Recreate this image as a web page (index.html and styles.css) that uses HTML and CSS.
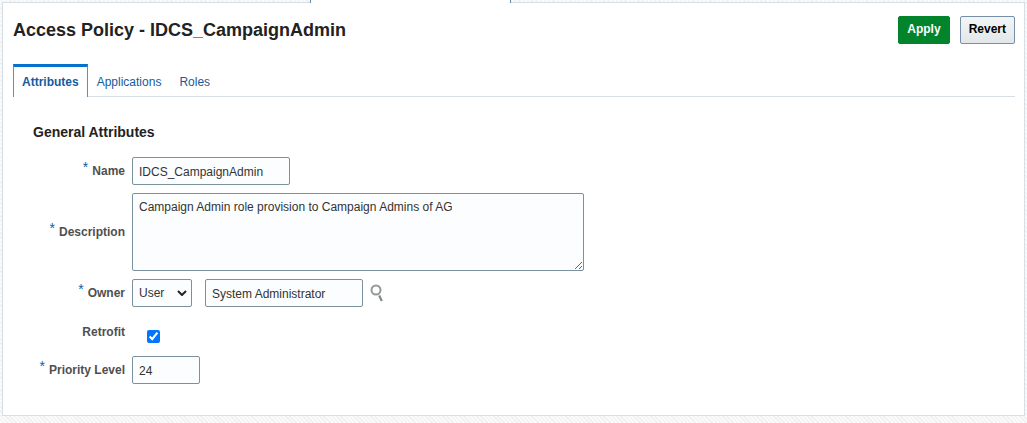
FILE: index.html
```html
<!DOCTYPE html>
<html lang="en">
<head>
<meta charset="utf-8">
<title>Access Policy - IDCS_CampaignAdmin</title>
<link rel="stylesheet" href="styles.css">
</head>
<body>
<div class="window-tabs"><div class="window-tab"></div></div>
<main class="panel">
  <header class="panel-header">
    <h1 class="title">Access Policy - IDCS_CampaignAdmin</h1>
    <div class="actions">
      <button type="button" class="button button-primary">Apply</button>
      <button type="button" class="button">Revert</button>
    </div>
  </header>
  <nav class="tabs">
    <a class="tab tab-active" href="#attributes">Attributes</a>
    <a class="tab" href="#applications">Applications</a>
    <a class="tab" href="#roles">Roles</a>
  </nav>
  <section class="section" id="attributes">
    <h2 class="section-title">General Attributes</h2>
    <form class="form">
      <label class="label" for="name"><span class="required">*</span>Name</label>
      <div class="field"><input class="control control-text" id="name" type="text" value="IDCS_CampaignAdmin"></div>

      <label class="label" for="description"><span class="required">*</span>Description</label>
      <div class="field"><textarea class="control control-area" id="description">Campaign Admin role provision to Campaign Admins of AG</textarea></div>

      <label class="label" for="owner-type"><span class="required">*</span>Owner</label>
      <div class="field">
        <div class="select">
          <select class="control control-select" id="owner-type"><option>User</option><option>Role</option></select>
          <svg class="chevron" viewBox="0 0 10 6" aria-hidden="true"><path d="M1 1l4 4 4-4" fill="none" stroke="#222" stroke-width="2"/></svg>
        </div>
        <input class="control control-text" type="text" value="System Administrator" aria-label="Owner name">
        <button type="button" class="search" aria-label="Search">
          <svg class="search-icon" viewBox="0 0 14 18" aria-hidden="true"><circle cx="6" cy="6" r="4.500" fill="#fff" stroke="#95989a" stroke-width="2"/><path d="M9.200 11.500l2.600 5.500" fill="none" stroke="#85888a" stroke-width="2.200"/></svg>
        </button>
      </div>

      <label class="label" for="retrofit">Retrofit</label>
      <div class="field field-check"><input class="check" id="retrofit" type="checkbox" checked></div>

      <label class="label" for="priority"><span class="required">*</span>Priority Level</label>
      <div class="field"><input class="control control-number" id="priority" type="text" value="24"></div>
    </form>
  </section>
</main>
</body>
</html>
```
FILE: styles.css
```css
* { box-sizing: border-box; }

body {
  margin: 0;
  padding: 0 2px 8px;
  min-height: 100vh;
  background: repeating-linear-gradient(45deg, #f0f0f0 0 1px, #fafafa 1px 3px);
  color: #333;
  font: 12px/16px "Liberation Sans", Arial, sans-serif;
}

.window-tabs {
  display: flex;
  height: 2px;
  padding-left: 308px;
}

.window-tab {
  position: relative;
  width: 201px;
  height: 3px;
  border: solid #6b8ba4;
  border-width: 0 1px;
  background: #fff;
}

.panel {
  padding: 13px 9px 31px 10px;
  border: 1px solid #d6dfe6;
  background: #fff;
}

.panel-header {
  display: flex;
  align-items: flex-start;
  justify-content: space-between;
}

.title {
  margin: 0;
  color: #222;
  font-size: 18px;
  line-height: 28px;
}

.actions {
  display: flex;
  gap: 10px;
}

.button {
  height: 28px;
  padding: 0 8px 2px;
  border: 1px solid #7690a8;
  border-radius: 2px;
  background: linear-gradient(#f3f5f6, #e3e7ea);
  color: #000;
  font: bold 12px/16px "Liberation Sans", Arial, sans-serif;
}

.button-primary {
  border-color: #02842d;
  background: #02842d;
  color: #fff;
}

.tabs {
  display: flex;
  margin-top: 20px;
  background: linear-gradient(#d6dfe6, #d6dfe6) bottom / 100% 1px no-repeat;
}

.tab {
  padding: 7px 9px;
  border-top: 3px solid transparent;
  color: #145c9e;
  text-decoration: none;
}

.tab-active {
  padding: 7px 8px;
  border: 1px solid #6f8ca3;
  border-width: 3px 1px 0;
  border-top-color: #0572ce;
  background: #fff;
  font-weight: bold;
}

.section { padding: 26px 20px 0; }

.section-title {
  margin: 0 0 16px;
  color: #222;
  font-size: 14px;
  line-height: 18px;
}

.form {
  display: grid;
  grid-template-columns: 92px 1fr;
  gap: 8px 7px;
  align-items: center;
}

.label {
  color: #4f4f4f;
  font-weight: bold;
  text-align: right;
  white-space: nowrap;
}

.required {
  position: relative;
  top: -3px;
  margin-right: 4px;
  color: #145c9e;
  font-size: 14px;
  font-weight: normal;
  line-height: 12px;
}

.field {
  display: flex;
  align-items: center;
}

.control {
  height: 28px;
  margin: 0;
  padding: 2px 5px 0 6px;
  border: 1px solid #7a929e;
  border-radius: 2px;
  background: #fcfdfe;
  color: #333;
  font: 12px/16px "Liberation Sans", Arial, sans-serif;
}

.control-text { width: 158px; }

.control-area {
  width: 452px;
  height: 78px;
  padding-top: 5px;
}

.control-number { width: 68px; }

.select {
  position: relative;
  margin-right: 13px;
}

.control-select {
  display: block;
  width: 60px;
  padding-top: 0;
  appearance: none;
}

.chevron {
  position: absolute;
  top: 11px;
  right: 5px;
  width: 10px;
  height: 6px;
  pointer-events: none;
}

.search {
  margin-left: 7px;
  padding: 0;
  border: 0;
  background: none;
}

.search-icon {
  display: block;
  width: 14px;
  height: 18px;
}

.field-check {
  height: 33px;
  padding: 10px 0 0 15px;
}

.check {
  width: 13px;
  height: 13px;
  margin: 0;
}
```
